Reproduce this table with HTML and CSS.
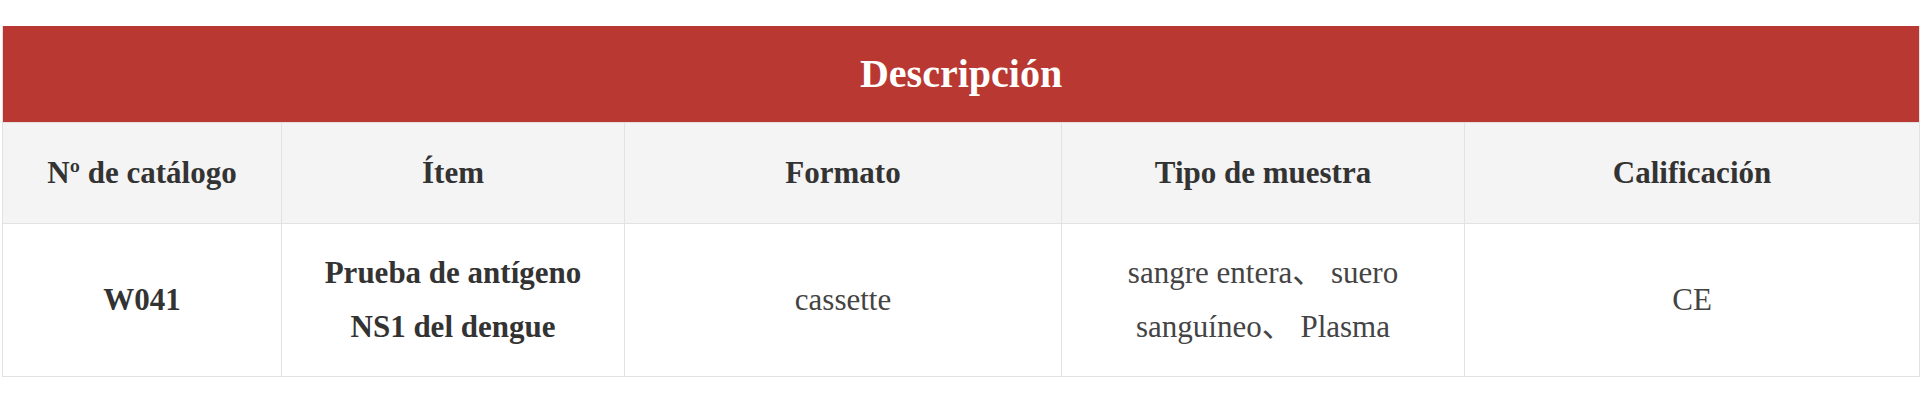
FILE: index.html
```html
<!DOCTYPE html>
<html lang="es">
<head>
<meta charset="utf-8">
<title>Descripción</title>
<link rel="stylesheet" href="styles.css">
</head>
<body>
<div class="wrap">
  <table class="spec">
    <colgroup>
      <col class="c1"><col class="c2"><col class="c3"><col class="c4"><col class="c5">
    </colgroup>
    <thead>
      <tr><th class="title" colspan="5">Descripción</th></tr>
      <tr class="heads">
        <th>Nº de catálogo</th>
        <th>Ítem</th>
        <th>Formato</th>
        <th>Tipo de muestra</th>
        <th>Calificación</th>
      </tr>
    </thead>
    <tbody>
      <tr>
        <td class="strong">W041</td>
        <td class="strong">Prueba de antígeno<br>NS1 del dengue</td>
        <td>cassette</td>
        <td>sangre entera、 suero<br>sanguíneo、 Plasma</td>
        <td>CE</td>
      </tr>
    </tbody>
  </table>
</div>
</body>
</html>
```
FILE: styles.css
```css
html, body {
  margin: 0;
  padding: 0;
  background: #ffffff;
}
.wrap {
  padding: 26px 1px 0 2px;
}
.spec {
  width: 1917px;
  table-layout: fixed;
  border-collapse: collapse;
  font-family: "Liberation Serif", "Noto Sans CJK SC", serif;
  color: #333333;
}
.c1 { width: 279px; }
.c2 { width: 343px; }
.c3 { width: 437px; }
.c4 { width: 403px; }
.c5 { width: 455px; }
.spec th, .spec td {
  border: 1px solid #e2e2e2;
  text-align: center;
  vertical-align: middle;
  font-size: 31px;
  line-height: 54px;
  padding: 23px 10px;
}
.spec th.title {
  background: #b93832;
  color: #ffffff;
  font-size: 40px;
  line-height: 96px;
  padding: 0;
  border-top: 0;
}
.heads th {
  background: #f4f4f4;
  font-weight: bold;
}
.spec td {
  font-weight: normal;
  color: #444444;
  padding: 22px 10px;
}
.spec td.strong {
  font-weight: bold;
  color: #333333;
}
```
